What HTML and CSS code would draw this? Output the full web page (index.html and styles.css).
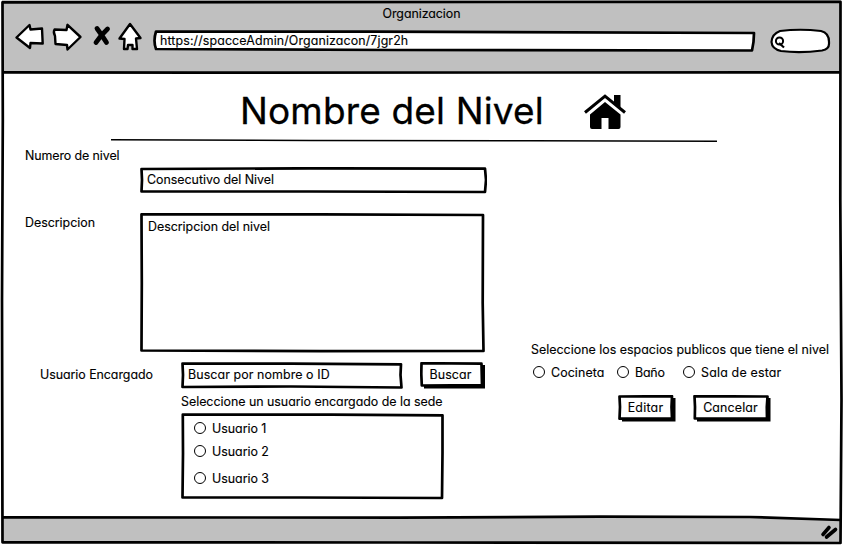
FILE: index.html
```html
<!DOCTYPE html>
<html lang="es">
<head>
<meta charset="utf-8">
<title>Organizacion</title>
<link rel="stylesheet" href="styles.css">
</head>
<body>
<div class="browser">
  <header class="chrome">
    <div class="window-title">Organizacion</div>
    <div class="toolbar">
      <svg class="nav" width="140" height="34" viewBox="10 20 140 34">
        <g fill="#fff" stroke="#000" stroke-width="2.4" stroke-linejoin="round">
          <path d="M16.5 37.5 L29.5 25 L30.5 29.5 L42 28.5 L42.7 43.5 L30.5 43 L30 48 Z"/>
          <path d="M80.5 37 L67.5 24.8 L66.5 30 L54.5 29.5 Q53 32 55 36 L55.5 44 L67 45 L67.5 49.5 Z"/>
          <path d="M130 24 L140.5 38 L136 38.5 L137 49 L132.5 49 L132.5 45 L128 45 L127.5 49 L124 49 L124.5 39 L119.5 38.5 Z"/>
        </g>
        <path d="M97 28.500 Q101.500 34.500 106.500 42.500 M107.500 29 Q100.500 35.500 96 42.500" fill="none" stroke="#000" stroke-width="4.800" stroke-linecap="round"/>
      </svg>
      <div class="address">
        <svg class="sketch" width="603" height="22" viewBox="0 0 603 22"><path d="M3 1.500 L220 1.700 L601 3 Q601 12 599 20.500 L240 20 L3 19 Q0 11 3 1.500 Z"/></svg>
        <span class="t">https://spacceAdmin/Organizacon/7jgr2h</span>
      </div>
      <div class="search">
        <svg width="62" height="26" viewBox="770 28 62 26"><path d="M780 31 Q800 28.500 821 31 Q829.500 33 829 43 Q829.500 49 822 50.500 Q800 53.500 781 51 Q772 49 771.500 42 Q772 34 780 31 Z" fill="#fff" stroke="#000" stroke-width="2.200"/><circle cx="779.500" cy="41" r="3.600" fill="#fff" stroke="#000" stroke-width="2"/><path d="M779 43 L784 47.500" stroke="#000" stroke-width="2.200"/></svg>
      </div>
    </div>
  </header>

  <main class="page">
    <div class="heading">
      <h1>Nombre del Nivel</h1>
      <svg class="home" width="44" height="36" viewBox="583 94 44 36"><path d="M605 102 L620.500 114.500 V127 Q620.500 129 618.500 129 H608.500 V118 H601.500 V129 H592 Q590 129 590 127 V114.500 Z"/><path d="M585 112.500 L605 96.200 L625 112.500" fill="none" stroke="#000" stroke-width="3"/><path d="M614 95 H620.500 V108 L614 103 Z"/></svg>
    </div>
    <svg class="rule" width="608" height="4" viewBox="0 0 608 4"><path d="M0 0.800 L200 1.500 L420 1.700 L606 2.200" fill="none" stroke="#000" stroke-width="1.500"/></svg>

    <div class="columns">
      <section class="form">
        <div class="field number">
          <label>Numero de nivel</label>
          <div class="box input-level">
            <svg class="sketch" width="347" height="27" viewBox="0 0 347 27"><path d="M1.500 2 L170 1.300 L345 1.700 L346 13 L345 25 L170 24.500 L1.500 24.500 L2 13 Z"/></svg>
            <span class="t">Consecutivo del Nivel</span>
          </div>
        </div>
        <div class="field description">
          <label>Descripcion</label>
          <div class="box area">
            <svg class="sketch" width="345" height="140" viewBox="0 0 345 140"><path d="M1.500 1.300 L180 1.400 L343 2 L342.700 90 L343.500 138 L180 138.200 L1.500 137.500 L1.800 70 Z"/></svg>
            <span class="t">Descripcion del nivel</span>
          </div>
        </div>
        <div class="field manager">
          <label>Usuario Encargado</label>
          <div class="box input-user">
            <svg class="sketch" width="222" height="28" viewBox="0 0 222 28"><path d="M1.500 1.500 L110 1.600 L220 2.300 L219.500 13 L220.500 25.500 L110 24.500 L1.500 25 L2 13 Z"/></svg>
            <span class="t">Buscar por nombre o ID</span>
          </div>
          <button class="button find" type="button">
            <svg class="sketch" width="66" height="27" viewBox="0 0 66 27"><path class="shade" d="M4 3 H65 V26.500 H4 Z"/><path d="M1.500 1.200 L61.500 1.700 L62 23 L1.800 23.500 L1.300 12 Z"/></svg>
            <span class="t">Buscar</span>
          </button>
        </div>
        <div class="picker">
          <div class="hint">Seleccione un usuario encargado de la sede</div>
          <div class="box users">
            <svg class="sketch" width="263" height="87" viewBox="0 0 263 87"><path d="M1.800 1.500 L150 1.600 L261.500 2.300 L261.500 40 L261 85 L120 84.500 L1.500 84.500 L2 40 Z"/></svg>
            <div class="option"><i class="radio"></i><span class="t">Usuario 1</span></div>
            <div class="option"><i class="radio"></i><span class="t">Usuario 2</span></div>
            <div class="option last"><i class="radio"></i><span class="t">Usuario 3</span></div>
          </div>
        </div>
      </section>

      <section class="side">
        <div class="hint">Seleccione los espacios publicos que tiene el nivel</div>
        <div class="spaces">
          <div class="option kitchen"><i class="radio"></i><span>Cocineta</span></div>
          <div class="option bath"><i class="radio"></i><span>Baño</span></div>
          <div class="option living"><i class="radio"></i><span>Sala de estar</span></div>
        </div>
        <div class="actions">
          <button class="button edit" type="button">
            <svg class="sketch" width="58" height="27" viewBox="0 0 58 27"><path class="shade" d="M4 3 H57.500 V26.500 H4 Z"/><path d="M1.500 1.500 L54 1.200 L53.500 12 L54 23.500 L1.500 23.700 L2 12 Z"/></svg>
            <span class="t">Editar</span>
          </button>
          <button class="button cancel" type="button">
            <svg class="sketch" width="78" height="27" viewBox="0 0 78 27"><path class="shade" d="M4 3 H77.500 V26.500 H4 Z"/><path d="M1.500 1.200 L74.500 1.500 L73.800 12 L74 23.700 L1.800 23.500 L2 12 Z"/></svg>
            <span class="t">Cancelar</span>
          </button>
        </div>
      </section>
    </div>
  </main>

  <svg class="frame" width="843" height="545" viewBox="0 0 843 545">
    <path d="M3 517 L400 517.300 L650 516.800 L750 516.800 L841 520 L841 543 L3 543 Z" fill="#c0c0c0"/>
    <g fill="none" stroke="#000" stroke-width="2.700" stroke-linejoin="round">
      <path d="M2.500 2.300 L840.500 1.800 L840.300 200 L841.500 400 L840.500 543 L400 542.500 L2.500 542.300 L2 300 L2.800 120 Z"/>
      <path d="M2.500 72.300 L200 72.600 L840 72.400"/>
      <path d="M3 517.300 L400 517.600 L600 516.600 L750 517 L841 520"/>
    </g>
    <path d="M829 527.500 L823 534.500 M835.500 529.500 L826.500 537" stroke="#000" stroke-width="3.600" stroke-linecap="round"/>
  </svg>
</div>
</body>
</html>
```
FILE: styles.css
```css
* { box-sizing: border-box; }
body {
  margin: 0;
  background: #fff;
  color: #000;
  font: 12.4px/18px Inter, "Liberation Sans", sans-serif;
  font-feature-settings: "cv11" 1, "calt" 0;
  letter-spacing: -0.01px;
  -webkit-text-stroke: 0.15px #000;
}
.browser { position: relative; width: 843px; height: 545px; display: flex; flex-direction: column; overflow: hidden; }
.frame { position: absolute; inset: 0; pointer-events: none; }

.chrome { height: 73px; padding-top: 5px; background: #c0c0c0; margin: 0 2px; flex: none; }
.window-title { text-align: center; height: 15px; letter-spacing: -0.05px; }
.toolbar { display: flex; padding-left: 8px; }
.nav { flex: none; }
.address { position: relative; width: 603px; height: 22px; margin: 10px 0 0 3px; padding: 2px 7px; letter-spacing: 0.13px; }
.address .t, .box .t, .button .t { position: relative; white-space: nowrap; }
.search { margin: 8px 0 0 14px; height: 26px; }
.sketch { position: absolute; left: 0; top: 0; fill: #fff; stroke: #000; stroke-width: 2.7; stroke-linejoin: round; }
.sketch .shade { fill: #000; stroke: none; }

.page { height: 444px; display: flex; flex-direction: column; flex: none; }
.heading { display: flex; padding: 15px 0 0 240px; height: 66px; }
h1 { margin: 0; width: 343px; font-size: 37px; line-height: 46px; font-weight: 400; letter-spacing: 0.15px; white-space: nowrap; -webkit-text-stroke-width: 0.3px; }
.home { margin-top: 6px; }
.rule { margin-left: 111px; flex: none; }

.columns { display: flex; }
.form { width: 531px; }
.field { display: flex; }
.box { position: relative; }
.number { padding-left: 25px; margin-top: 4px; height: 66px; }
.number label { width: 115px; letter-spacing: -0.08px; }
.description label { width: 115px; }
.input-level { width: 347px; height: 27px; margin-top: 20px; padding: 4px 7px; }
.description { padding-left: 25px; height: 149px; }
.description label { padding-top: 1px; }
.area { width: 345px; height: 140px; padding: 5px 8px; }
.manager { padding-left: 40px; height: 31px; }
.manager label { width: 141px; padding-top: 4px; letter-spacing: -0.04px; }
.input-user { width: 222px; height: 28px; padding: 4px 7px; letter-spacing: 0.1px; }
.button { position: relative; height: 27px; border: 0; padding: 0 3px 1px 0; background: none; color: inherit; font: inherit; font-feature-settings: inherit; }
.find { width: 66px; margin-left: 17px; padding-right: 5px; letter-spacing: 0.13px; }
.picker { padding-left: 181px; }
.users { width: 263px; height: 87px; margin-top: 4px; padding: 7px 13px; }
.option { display: flex; align-items: center; height: 16px; gap: 6px; white-space: nowrap; }
.option span { padding-top: 2px; }
.users .option { margin-bottom: 7px; }
.users .last { margin-top: 11px; }
.radio { position: relative; width: 12px; height: 12px; border: 1.3px solid #000; border-radius: 50%; background: #fff; }
.hint { height: 16px; white-space: nowrap; }

.side { padding-top: 198px; width: 310px; }
.side .hint { letter-spacing: 0.02px; }
.spaces { display: flex; margin-top: 7px; padding-left: 2px; }
.kitchen { width: 84px; letter-spacing: 0.1px; }
.bath { width: 66px; letter-spacing: -0.2px; }
.living { letter-spacing: 0.2px; }
.actions { display: flex; gap: 17px; margin: 15px 0 0 87px; }
.edit { width: 58px; letter-spacing: 0.25px; }
.cancel { width: 78px; letter-spacing: 0.15px; }
```
